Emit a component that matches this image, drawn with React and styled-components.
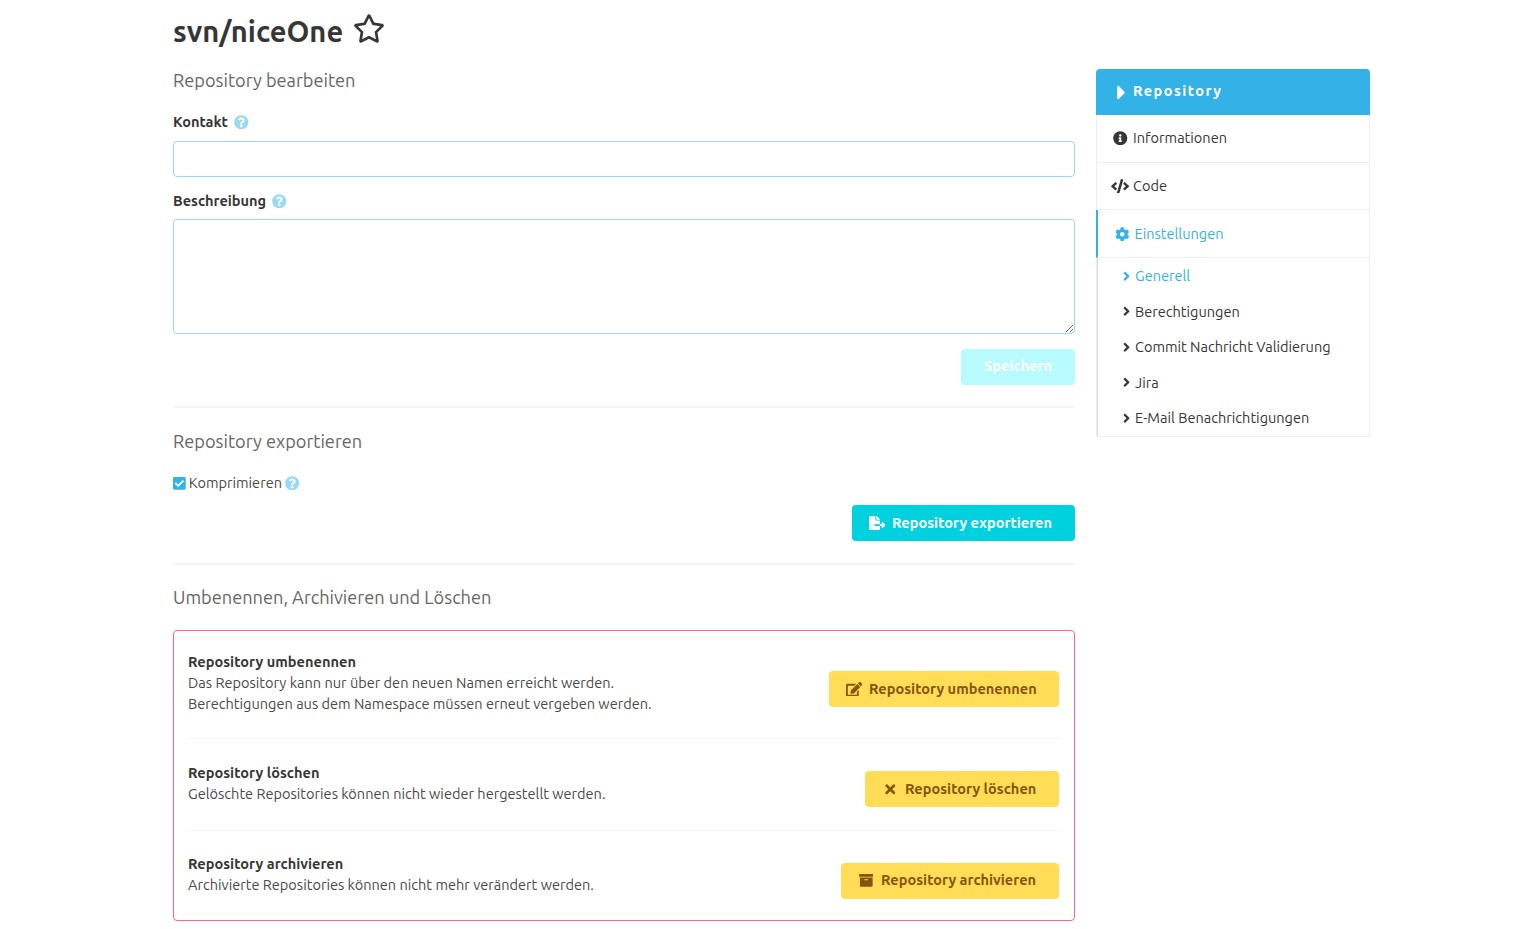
import React from "react";
import styled, { createGlobalStyle, css } from "styled-components";
import {
  FaAngleRight,
  FaArchive,
  FaCaretRight,
  FaCheckSquare,
  FaCode,
  FaCog,
  FaEdit,
  FaFileExport,
  FaInfoCircle,
  FaQuestionCircle,
  FaRegStar,
  FaTimes,
} from "react-icons/fa";

const GlobalStyle = createGlobalStyle`
  *, *::before, *::after { box-sizing: border-box; }
  body {
    margin: 0;
    background: #fff;
    color: #4a4a4a;
    font-family: Ubuntu, "Noto Sans", "Open Sans", sans-serif;
    font-size: 14.56px;
    line-height: 21px;
  }
  h1, h2, h3, p, ul { margin: 0; padding: 0; }
  ul { list-style: none; }
  svg { display: block; flex: none; }
`;

const Page = styled.div`
  width: 1197px;
  margin-left: 173px;
`;

const TitleRow = styled.header`
  display: flex;
  gap: 9.5px;
  height: 69px;
  padding-top: 11px;
  color: #363636;
  svg {
    width: 32px;
    height: 29px;
    margin-top: 2.5px;
  }
`;

const Title = styled.h1`
  width: 170px;
  font-size: 29.12px;
  line-height: 42px;
  white-space: nowrap;
`;

const Columns = styled.div`
  display: flex;
  align-items: flex-start;
  gap: 21px;
`;

const Main = styled.main`
  width: 902px;
`;

const Subtitle = styled.h2`
  height: 22px;
  color: #666;
  font-size: 18.2px;
  font-weight: 400;
  line-height: 22px;
`;

const Field = styled.div`
  margin-top: ${(p) => p.$top}px;
`;

const Label = styled.label`
  display: flex;
  align-items: center;
  gap: 6.3px;
  height: 21px;
  margin-bottom: ${(p) => p.$bottom}px;
  color: #363636;
  font-weight: 700;
`;

const HelpIcon = styled(FaQuestionCircle)`
  width: 14.56px;
  height: 14.56px;
  margin-top: 1px;
  color: #98d8f3;
`;

const control = css`
  display: block;
  width: 100%;
  border: 1px solid #98d8f3;
  border-radius: 4px;
  outline: none;
  background: #fff;
  color: #363636;
  font: inherit;
`;

const Input = styled.input`
  ${control}
  height: 36px;
  padding: 0 10px;
`;

const TextArea = styled.textarea`
  ${control}
  height: 115px;
  padding: 8px 10px;
  resize: vertical;
`;

const Actions = styled.div`
  display: flex;
  justify-content: flex-end;
  margin-top: ${(p) => p.$top}px;
`;

const tones = {
  disabled: "background: #b8fbff; color: #fff;",
  primary: "background: #00d1df; color: #fff;",
  warning: "background: #ffdd57; color: #86540d;",
};

const Button = styled.button`
  display: flex;
  flex: none;
  align-items: center;
  justify-content: flex-start;
  width: ${(p) => p.$width}px;
  height: 36px;
  padding: 0 0 ${(p) => (p.$raised ? 3 : 1)}px ${(p) => (p.$plain ? 23 : 14)}px;
  border: 0;
  border-radius: 4px;
  font: inherit;
  font-weight: 700;
  letter-spacing: 0.02px;
  white-space: nowrap;
  ${(p) => tones[p.$tone]}
`;

const ButtonIcon = styled.span`
  display: flex;
  justify-content: center;
  width: 22px;
  margin: 1px 4px 0 0;
  svg {
    width: ${(p) => p.$width}px;
    height: 14.56px;
  }
`;

const Rule = styled.hr`
  height: 2px;
  margin: ${(p) => p.$top}px 0 ${(p) => p.$bottom}px;
  border: 0;
  background: #f5f5f5;
`;

const CheckRow = styled.label`
  display: flex;
  align-items: center;
  height: 21px;
  margin-top: 20px;
  & > svg:first-child {
    width: 12.74px;
    height: 14.56px;
    margin: 1px 3px 0 0;
    color: #33b2e8;
  }
  & > svg:last-child {
    margin-left: 3px;
  }
`;

const DangerZone = styled.section`
  height: 291px;
  margin-top: 22px;
  padding: 0 15px 0 14px;
  border: 1px solid #ff6685;
  border-radius: 4px;
`;

const DangerRow = styled.div`
  display: flex;
  align-items: flex-start;
  justify-content: space-between;
  height: ${(p) => p.$height}px;
  padding-top: ${(p) => p.$top}px;
  & + & {
    border-top: 1px solid #f5f5f5;
  }
  button {
    margin-top: ${(p) => p.$buttonTop}px;
  }
`;

const DangerTitle = styled.h3`
  color: #363636;
  font-size: inherit;
  line-height: 21px;
  letter-spacing: 0.03px;
`;

const Line = styled.p`
  white-space: nowrap;
`;

const Menu = styled.aside`
  width: 274px;
`;

const MenuHeader = styled.div`
  display: flex;
  align-items: center;
  gap: 6px;
  height: 46px;
  padding: 0 0 3px 20px;
  border-radius: 4px 4px 0 0;
  background: #33b2e8;
  color: #fff;
  font-weight: 700;
  letter-spacing: 1.456px;
  svg {
    width: 11px;
    height: 23px;
    margin-top: 3px;
  }
`;

const MenuBody = styled.nav`
  border: 1px solid #eee;
  border-top: 0;
`;

const MenuItem = styled.a`
  display: flex;
  align-items: center;
  height: ${(p) => p.$height}px;
  padding: 0 0 ${(p) => p.$bottom || 0}px 14px;
  border-bottom: 1px solid #eee;
  color: #363636;
  ${(p) =>
    p.$active &&
    css`
      margin-left: -1px;
      padding-left: 14.5px;
      border-left: 2px solid #33b2e8;
      color: #33b2e8;
    `}
`;

const MenuIcon = styled.span`
  display: flex;
  justify-content: center;
  width: 19px;
  margin: 1px 3px 0 0;
  svg {
    width: ${(p) => p.$width}px;
    height: 14.56px;
  }
`;

const SubMenu = styled.ul`
  height: 178px;
  border-left: 1px solid #dbdbdb;
`;

const SubItem = styled.li`
  display: flex;
  align-items: center;
  height: 35.5px;
  padding-left: 24px;
  color: ${(p) => (p.$active ? "#33b2e8" : "#363636")};
  svg {
    width: 9.1px;
    height: 14.56px;
    margin: 1px 3.9px 0 0;
  }
`;

const subItems = [
  { label: "Generell", active: true },
  { label: "Berechtigungen" },
  { label: "Commit Nachricht Validierung" },
  { label: "Jira" },
  { label: "E-Mail Benachrichtigungen" },
];

export default function App() {
  return (
    <>
      <GlobalStyle />
      <Page>
        <TitleRow>
          <Title>svn/niceOne</Title>
          <FaRegStar />
        </TitleRow>
        <Columns>
          <Main>
            <Subtitle>Repository bearbeiten</Subtitle>
            <Field $top={20}>
              <Label $bottom={9}>
                Kontakt <HelpIcon />
              </Label>
              <Input />
            </Field>
            <Field $top={13}>
              <Label $bottom={8}>
                Beschreibung <HelpIcon />
              </Label>
              <TextArea />
            </Field>
            <Actions $top={15}>
              <Button $tone="disabled" $width={114} $plain $raised>
                Speichern
              </Button>
            </Actions>

            <Rule $top={21} $bottom={22} />
            <Subtitle>Repository exportieren</Subtitle>
            <CheckRow>
              <FaCheckSquare />
              Komprimieren
              <HelpIcon />
            </CheckRow>
            <Actions $top={12}>
              <Button $tone="primary" $width={223}>
                <ButtonIcon $width={16.38}>
                  <FaFileExport />
                </ButtonIcon>
                Repository exportieren
              </Button>
            </Actions>

            <Rule $top={22} $bottom={21} />
            <Subtitle>Umbenennen, Archivieren und Löschen</Subtitle>
            <DangerZone>
              <DangerRow $height={107} $top={20} $buttonTop={20}>
                <div>
                  <DangerTitle>Repository umbenennen</DangerTitle>
                  <Line>Das Repository kann nur über den neuen Namen erreicht werden.</Line>
                  <Line>Berechtigungen aus dem Namespace müssen erneut vergeben werden.</Line>
                </div>
                <Button $tone="warning" $width={230}>
                  <ButtonIcon $width={16.38}>
                    <FaEdit />
                  </ButtonIcon>
                  Repository umbenennen
                </Button>
              </DangerRow>
              <DangerRow $height={92} $top={23} $buttonTop={9}>
                <div>
                  <DangerTitle>Repository löschen</DangerTitle>
                  <Line>Gelöschte Repositories können nicht wieder hergestellt werden.</Line>
                </div>
                <Button $tone="warning" $width={194}>
                  <ButtonIcon $width={14.56}>
                    <FaTimes />
                  </ButtonIcon>
                  Repository löschen
                </Button>
              </DangerRow>
              <DangerRow $height={90} $top={22} $buttonTop={10}>
                <div>
                  <DangerTitle>Repository archivieren</DangerTitle>
                  <Line>Archivierte Repositories können nicht mehr verändert werden.</Line>
                </div>
                <Button $tone="warning" $width={218} $raised>
                  <ButtonIcon $width={14.56}>
                    <FaArchive />
                  </ButtonIcon>
                  Repository archivieren
                </Button>
              </DangerRow>
            </DangerZone>
          </Main>

          <Menu>
            <MenuHeader>
              <FaCaretRight />
              Repository
            </MenuHeader>
            <MenuBody>
              <MenuItem $height={48} $bottom={2}>
                <MenuIcon $width={14.56}>
                  <FaInfoCircle />
                </MenuIcon>
                Informationen
              </MenuItem>
              <MenuItem $height={47} $bottom={1}>
                <MenuIcon $width={18.2}>
                  <FaCode />
                </MenuIcon>
                Code
              </MenuItem>
              <MenuItem $height={48} $active>
                <MenuIcon $width={14.56}>
                  <FaCog />
                </MenuIcon>
                Einstellungen
              </MenuItem>
              <SubMenu>
                {subItems.map((item) => (
                  <SubItem key={item.label} $active={item.active}>
                    <FaAngleRight />
                    {item.label}
                  </SubItem>
                ))}
              </SubMenu>
            </MenuBody>
          </Menu>
        </Columns>
      </Page>
    </>
  );
}
